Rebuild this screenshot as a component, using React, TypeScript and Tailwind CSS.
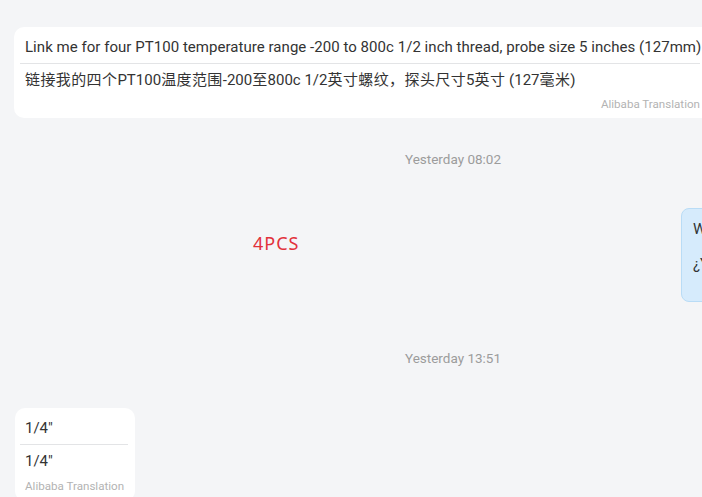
import React from "react";

const font = { fontFamily: 'Roboto, "Noto Sans CJK SC", sans-serif' };

function C({ children }: { children: React.ReactNode }) {
  return <span className="text-[15px] tracking-[0.4px]">{children}</span>;
}

export default function App() {
  return (
    <div
      className="relative w-[702px] h-[497px] overflow-hidden bg-[#f4f5f7]"
      style={font}
    >
      <div className="w-[906px] flex flex-col">
        {/* top translated message */}
        <div className="ml-[14px] mt-[27px] w-[698px] rounded-[10px] bg-white pl-[11px] pr-[12px] pt-[10px] pb-[7px]">
          <div className="text-[15px] tracking-[0.04px] leading-[20px] text-[#333] whitespace-nowrap">
            Link me for four PT100 temperature range -200 to 800c 1/2 inch thread, probe size 5 inches (127mm)
          </div>
          <div className="-ml-[5px] mt-[6px] h-px bg-[#e3e4e6]" />
          <div className="mt-[6px] text-[15px] leading-[20px] text-[#333] whitespace-nowrap">
            <C>链接我的四个</C>PT100<C>温度范围</C>-200<C>至</C>800c 1/2<C>英寸螺纹，探头尺寸</C>5<C>英寸</C> (127<C>毫米</C>)
          </div>
          <div className="mt-[7px] text-right text-[11.6px] leading-[14px] text-[#b3b3b3] whitespace-nowrap">
            Alibaba Translation
          </div>
        </div>

        {/* timestamp */}
        <div className="mt-[32px] text-center text-[13.5px] leading-[18px] text-[#9c9c9c]">
          Yesterday 08:02
        </div>

        {/* outgoing bubble */}
        <div className="mt-[40px] flex justify-end pr-[12px]">
          <div className="w-[213px] h-[94px] rounded-[8px] border border-[#b9dcf6] bg-[#d6ebfc] pl-[11px] pt-[10px]">
            <div className="text-[15px] leading-[20px] text-[#333] whitespace-nowrap">
              What temperature range do you need?
            </div>
            <div className="mt-[15px] text-[15px] leading-[20px] text-[#333] whitespace-nowrap">
              ¿Y qué rango de temperatura necesita?
            </div>
          </div>
        </div>

        {/* timestamp */}
        <div className="mt-[47px] text-center text-[13.5px] leading-[18px] text-[#9c9c9c]">
          Yesterday 13:51
        </div>

        {/* bottom translated message */}
        <div className="ml-[15px] mt-[41px] w-[120px] rounded-[10px] bg-white pl-[10px] pr-[4px] pt-[10px] pb-[8px]">
          <div className="text-[15px] leading-[20px] text-[#333]">1/4"</div>
          <div className="-ml-[5px] mr-[3px] mt-[6px] h-px bg-[#e3e4e6]" />
          <div className="mt-[6px] text-[15px] leading-[20px] text-[#333]">1/4″</div>
          <div className="mt-[8px] text-[11.6px] leading-[14px] text-[#b3b3b3] whitespace-nowrap">
            Alibaba Translation
          </div>
        </div>
      </div>

      {/* red annotation */}
      <div
        className="absolute left-[253px] top-[231px] text-[18px] leading-[24px] tracking-[1px] text-[#e2313b]"
        style={{ fontFamily: '"Noto Sans", "Open Sans", sans-serif' }}
      >
        4PCS
      </div>
    </div>
  );
}
